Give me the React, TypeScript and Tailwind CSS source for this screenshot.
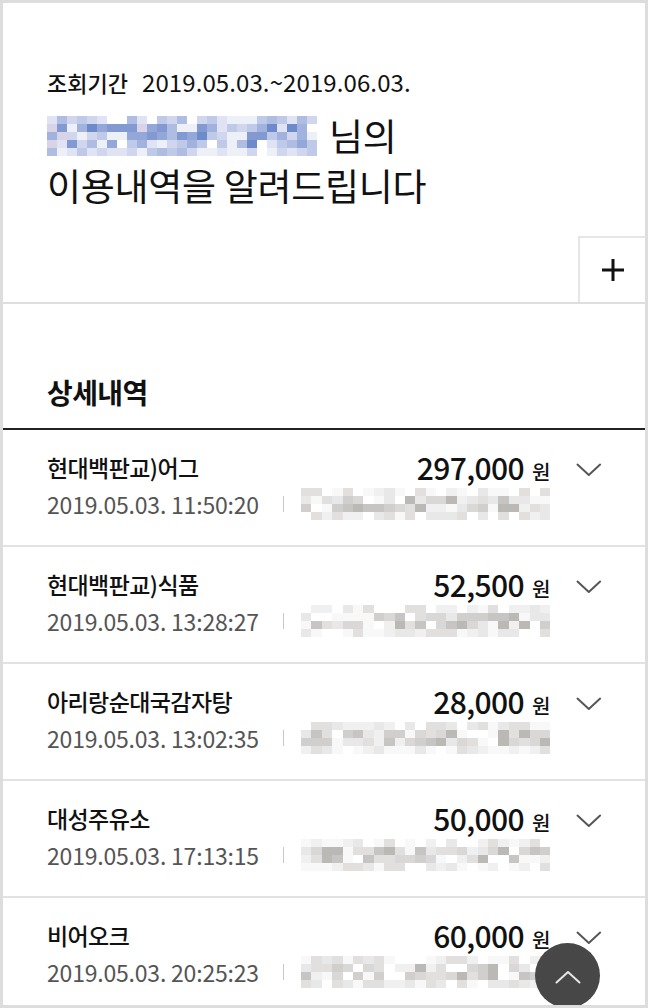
import React from "react";

const FONT = "font-['Noto_Sans_CJK_KR','Noto_Sans',sans-serif]";

type Row = { name: string; amount: string; date: string };

const rows: Row[] = [
  { name: "현대백판교)어그", amount: "297,000", date: "2019.05.03. 11:50:20" },
  { name: "현대백판교)식품", amount: "52,500", date: "2019.05.03. 13:28:27" },
  { name: "아리랑순대국감자탕", amount: "28,000", date: "2019.05.03. 13:02:35" },
  { name: "대성주유소", amount: "50,000", date: "2019.05.03. 17:13:15" },
  { name: "비어오크", amount: "60,000", date: "2019.05.03. 20:25:23" },
];

// simple seeded noise for the pixelated (masked) parts
function noise(seed: number, count: number) {
  let s = seed;
  const out: number[] = [];
  for (let i = 0; i < count; i++) {
    s = (s * 9301 + 49297) % 233280;
    out.push(s / 233280);
  }
  return out;
}

const bluePalette = ["#ffffff", "#eef0f8", "#dfe3f3", "#cfd6ee", "#bfc9e8", "#b0bde3", "#a2b2de", "#94a7d9", "#8299d2", "#6d8acb", "#d9d3e8"];
const grayPalette = ["#ffffff", "#f8f8f8", "#f0f0f0", "#e9e8e8", "#e1e0df", "#d9d8d7", "#d0cfce", "#c6c5c3", "#bbb9b6", "#e3e7e8"];

function Mosaic({ seed, cols, rowsCount, cell, palette, heavy }: { seed: number; cols: number; rowsCount: number; cell: [number, number]; palette: string[]; heavy: number }) {
  const vals = noise(seed, cols * rowsCount);
  return (
    <div className="flex flex-col">
      {Array.from({ length: rowsCount }).map((_, r) => {
        const edge = r === 0 || r === rowsCount - 1;
        return (
          <div key={r} className="flex">
            {Array.from({ length: cols }).map((_, c) => {
              const v = vals[r * cols + c];
              const idx = Math.min(palette.length - 1, Math.floor(v * (edge ? heavy * 0.55 : heavy)));
              return <div key={c} style={{ width: cell[0], height: cell[1], background: palette[idx] }} />;
            })}
          </div>
        );
      })}
    </div>
  );
}

function Chevron({ up, className }: { up?: boolean; className?: string }) {
  return (
    <svg width="26" height="14" viewBox="0 0 26 14" fill="none" className={className}>
      <path d={up ? "M1.5 12.5 L13 2 L24.5 12.5" : "M1.5 1.5 L13 12 L24.5 1.5"} stroke="currentColor" strokeWidth="2" strokeLinecap="round" strokeLinejoin="round" />
    </svg>
  );
}

function HistoryRow({ row, i }: { row: Row; i: number }) {
  return (
    <div className="flex h-[117px] shrink-0 items-start border-b-2 border-[#e2e2e2] pl-[44px] pr-[43px] pt-[21px]">
      <div className="flex w-[506px] flex-col">
        <div className="flex h-[32px] items-center justify-between">
          <span className="text-[23px] font-medium tracking-[-0.6px] text-[#111]">{row.name}</span>
          <span className="flex items-baseline">
            <span className="text-[30px] font-medium tracking-[-0.6px] text-[#111]">{row.amount}</span>
            <span className="ml-[8px] text-[20px] font-medium text-[#111]">원</span>
          </span>
        </div>
        <div className="mt-[6px] flex h-[30px] items-center">
          <span className="w-[236px] text-[23px] tracking-[-0.2px] text-[#555]">{row.date}</span>
          <span className="h-[16px] w-px bg-[#c8c8c8]" />
          <div className="ml-[17px]">
            <Mosaic seed={17 + i * 3} cols={24} rowsCount={4} cell={[10.4, 8]} palette={grayPalette} heavy={9} />
          </div>
        </div>
      </div>
      <Chevron className="ml-[26px] mt-[12px] text-[#555]" />
    </div>
  );
}

export default function App() {
  return (
    <div className={`h-[1008px] w-[648px] bg-[#dddddd] p-[3px] ${FONT}`}>
      <div className="relative flex h-[1002px] flex-col overflow-hidden bg-white">
        <div className="flex shrink-0 flex-col border-b-2 border-[#dedede] pl-[44px] pt-[66px]">
          <div className="flex h-[26px] items-center text-[#111]">
            <span className="text-[22px] font-medium">조회기간</span>
            <span className="ml-[14px] text-[24px] tracking-[0.1px]">2019.05.03.~2019.06.03.</span>
          </div>
          <div className="mt-[16px] flex h-[50px] items-center">
            <Mosaic seed={5} cols={27} rowsCount={5} cell={[10, 8]} palette={bluePalette} heavy={11} />
            <span className="ml-[12px] text-[37px] font-normal tracking-[-0.3px] text-[#111]">님의</span>
          </div>
          <div className="flex h-[50px] items-center text-[37px] font-normal tracking-[-0.3px] text-[#111]">
            이용내역을 알려드립니다
          </div>
          <div className="mt-[25px] flex justify-end">
            <button className="flex h-[66px] w-[67px] items-center justify-center border-l-2 border-t-2 border-[#e6e6e6] bg-white">
              <svg width="24" height="24" viewBox="0 0 24 24">
                <path d="M12 1 V23 M1 12 H23" stroke="#111" strokeWidth="3" />
              </svg>
            </button>
          </div>
        </div>

        <div className="flex shrink-0 flex-col border-b-2 border-[#222] pl-[44px] pt-[68px] pb-[16px]">
          <span className="h-[40px] text-[28px] font-bold leading-[40px] tracking-[-0.6px] text-[#111]">상세내역</span>
        </div>

        {rows.map((r, i) => (
          <HistoryRow key={i} row={r} i={i} />
        ))}

        <button className="absolute left-[532px] top-[940px] flex h-[65px] w-[65px] items-start justify-center rounded-full bg-[#474747] pt-[27px] text-[#e6e6e6]">
          <Chevron up />
        </button>
      </div>
    </div>
  );
}
